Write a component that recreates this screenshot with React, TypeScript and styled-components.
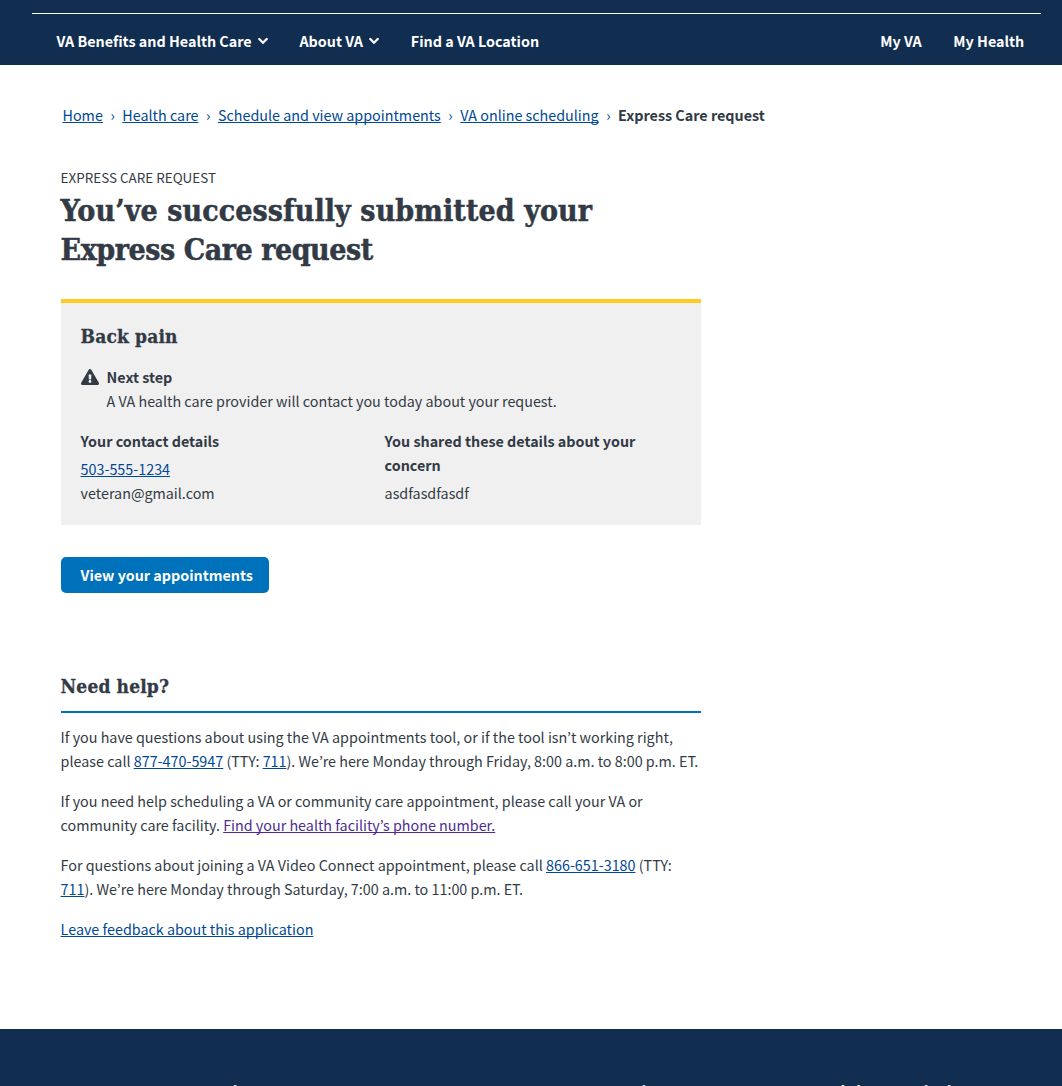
import React from "react";
import styled, { createGlobalStyle } from "styled-components";

const sans = `"Noto Sans CJK KR", "Open Sans", sans-serif`;
const slab = `"DejaVu Serif Condensed", "DejaVu Serif", serif`;
const navy = "#112e51";
const ink = "#323a45";

const GlobalStyle = createGlobalStyle`
  * { box-sizing: border-box; }
  html, body { margin: 0; padding: 0; background: #fff; }
  body { font: 14.33px/24px ${sans}; color: ${ink}; }
  h1, h2, h3, p, ul { margin: 0; padding: 0; }
`;

const Page = styled.div`
  display: flex;
  flex-direction: column;
  width: 1062px;
  height: 1086px;
  overflow: hidden;
`;

const Header = styled.header`
  flex: none;
  height: 65px;
  padding: 13px 21px 0 32px;
  background: ${navy};
`;

const Nav = styled.nav`
  display: flex;
  align-items: center;
  height: 52px;
  padding: 2px 16.8px 0 24.4px;
  border-top: 1px solid #fff;
  gap: 31.6px;
`;

const NavItem = styled.a<{ $end?: boolean }>`
  display: flex;
  align-items: center;
  gap: 6.2px;
  margin-left: ${(p) => (p.$end ? "auto" : "0")};
  color: #fff;
  font-weight: 700;
  white-space: nowrap;
`;

const Crumbs = styled.nav`
  display: flex;
  padding: 38px 0 0 62.5px;
  height: 63px;
`;

const Crumb = styled.span<{ $current?: boolean }>`
  white-space: nowrap;
  font-weight: ${(p) => (p.$current ? 700 : 400)};
`;

const Sep = styled.span`
  width: 19.5px;
  text-align: center;
  color: #004795;
`;

const Link = styled.a<{ $visited?: boolean }>`
  color: ${(p) => (p.$visited ? "#4c2c92" : "#004795")};
  text-decoration: underline;
  text-underline-offset: 1px;
  text-decoration-thickness: 1px;
  text-decoration-skip-ink: none;
`;

const Main = styled.main`
  flex: 1;
  width: 700.6px;
  padding: 37px 0 0 60.6px;
`;

const Kicker = styled.p`
  font-size: 13.45px;
  text-transform: uppercase;
`;

const Title = styled.h1`
  margin-top: 2px;
  font: 700 30px/39px ${slab};
  -webkit-text-stroke: 0.5px ${ink};
  white-space: nowrap;
`;

const TitleLine = styled.span<{ $spacing: number }>`
  display: block;
  letter-spacing: ${(p) => p.$spacing}px;
`;

const Card = styled.section`
  height: 226px;
  margin-top: 30px;
  padding: 20px;
  border-top: 4px solid #fdcb22;
  background: #f0f0f0;
`;

const SubTitle = styled.h2`
  font: 700 19px/26px ${slab};
  letter-spacing: 0.15px;
  -webkit-text-stroke: 0.3px currentColor;
  white-space: nowrap;
`;

const NextStep = styled.div`
  display: grid;
  grid-template-columns: 18px 1fr;
  column-gap: 8px;
  margin-top: 16px;

  svg { margin-top: 4px; }
`;

const Details = styled.div`
  display: grid;
  grid-template-columns: 304px 1fr;
  margin-top: 16px;
`;

const Column = styled.div`
  p { margin-top: 4px; }
`;

const Strong = styled.h3`
  font: 700 14.32px/24px ${sans};
`;

const Button = styled.button`
  display: block;
  height: 36px;
  width: 208px;
  margin-top: 32px;
  padding: 0 16px 0 20px;
  border: 0;
  border-radius: 5px;
  background: #0071bb;
  color: #fff;
  font: 700 14.32px/24px ${sans};
  text-align: left;
  white-space: nowrap;
`;

const Help = styled.section`
  margin-top: 80px;

  h2 { padding-bottom: 12px; border-bottom: 2px solid #0071bb; }
  p { margin-bottom: 16px; white-space: nowrap; }
  h2 + p { margin-top: 12px; }
`;

const Footer = styled.footer`
  display: grid;
  grid-template-columns: 234px 232px 228px 1fr;
  column-gap: 24px;
  flex: none;
  height: 57px;
  padding: 50px 0 0 32px;
  background: ${navy};
  color: #fff;
  overflow: hidden;
`;

const FooterTitle = styled.h2`
  font: 700 17px/26px ${sans};
  letter-spacing: 1.1px;
`;

const Chevron = () => (
  <svg width="10" height="8" viewBox="0 0 10 8" fill="none" stroke="#fff" strokeWidth="2.3" strokeLinecap="round">
    <path d="M1.3 2 5 5.7 8.7 2" />
  </svg>
);

const Warning = () => (
  <svg width="18" height="16" viewBox="0 0 576 512" fill={ink}>
    <path d="M569.517 440.013C587.975 472.007 564.806 512 527.94 512H48.054c-36.937 0-59.999-40.055-41.577-71.987L246.423 23.985c18.467-32.009 64.72-31.951 83.154 0l239.94 416.028zM288 354c-25.405 0-46 20.595-46 46s20.595 46 46 46 46-20.595 46-46-20.595-46-46-46zm-43.673-165.346l7.418 136c.347 6.364 5.609 11.346 11.982 11.346h48.546c6.373 0 11.635-4.982 11.982-11.346l7.418-136c.375-6.874-5.098-12.654-11.982-12.654h-63.383c-6.884 0-12.356 5.78-11.981 12.654z" />
  </svg>
);

const trail = ["Home", "Health care", "Schedule and view appointments", "VA online scheduling"];
const footerTitles = ["Veteran programs and services", "More VA resources", "Get VA updates", "In crisis? Get help now"];

export default function App() {
  return (
    <Page>
      <GlobalStyle />
      <Header>
        <Nav>
          <NavItem>VA Benefits and Health Care <Chevron /></NavItem>
          <NavItem>About VA <Chevron /></NavItem>
          <NavItem>Find a VA Location</NavItem>
          <NavItem $end>My VA</NavItem>
          <NavItem>My Health</NavItem>
        </Nav>
      </Header>
      <Crumbs>
        {trail.map((t) => (
          <React.Fragment key={t}>
            <Crumb><Link>{t}</Link></Crumb>
            <Sep>›</Sep>
          </React.Fragment>
        ))}
        <Crumb $current>Express Care request</Crumb>
      </Crumbs>
      <Main>
        <Kicker>Express Care request</Kicker>
        <Title>
          <TitleLine $spacing={0.09}>You’ve successfully submitted your</TitleLine>
          <TitleLine $spacing={-0.45}>Express Care request</TitleLine>
        </Title>
        <Card>
          <SubTitle>Back pain</SubTitle>
          <NextStep>
            <Warning />
            <div>
              <Strong>Next step</Strong>
              A VA health care provider will contact you today about your request.
            </div>
          </NextStep>
          <Details>
            <Column>
              <Strong>Your contact details</Strong>
              <p><Link>503-555-1234</Link><br />veteran@gmail.com</p>
            </Column>
            <Column>
              <Strong>You shared these details about your<br />concern</Strong>
              <p>asdfasdfasdf</p>
            </Column>
          </Details>
        </Card>
        <Button>View your appointments</Button>
        <Help>
          <SubTitle>Need help?</SubTitle>
          <p>
            If you have questions about using the VA appointments tool, or if the tool isn’t working right,<br />
            please call <Link>877-470-5947</Link> (TTY: <Link>711</Link>). We’re here Monday through Friday, 8:00 a.m. to 8:00 p.m. ET.
          </p>
          <p>
            If you need help scheduling a VA or community care appointment, please call your VA or<br />
            community care facility. <Link $visited>Find your health facility’s phone number.</Link>
          </p>
          <p>
            For questions about joining a VA Video Connect appointment, please call <Link>866-651-3180</Link> (TTY:<br />
            <Link>711</Link>). We’re here Monday through Saturday, 7:00 a.m. to 11:00 p.m. ET.
          </p>
          <p><Link>Leave feedback about this application</Link></p>
        </Help>
      </Main>
      <Footer>
        {footerTitles.map((t) => <FooterTitle key={t}>{t}</FooterTitle>)}
      </Footer>
    </Page>
  );
}
